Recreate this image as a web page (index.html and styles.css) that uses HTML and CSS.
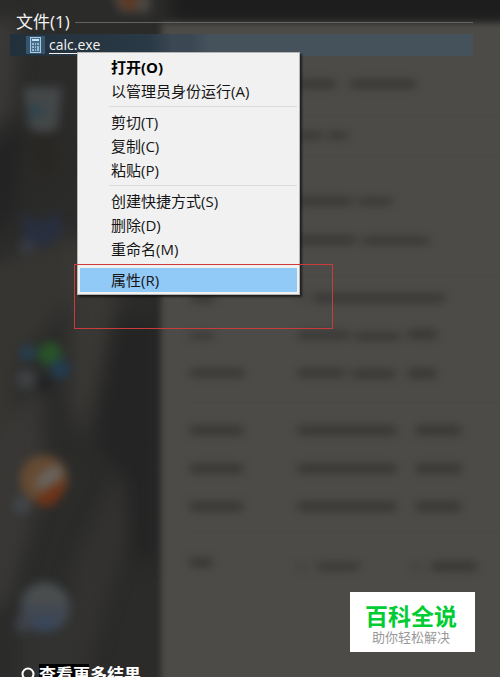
FILE: index.html
```html
<!DOCTYPE html>
<html lang="zh-CN">
<head>
<meta charset="utf-8">
<title>文件</title>
<link rel="stylesheet" href="styles.css">
</head>
<body>
<main class="screen">
  <svg class="backdrop" viewBox="0 0 500 677" preserveAspectRatio="xMinYMin slice" color-interpolation-filters="sRGB" aria-hidden="true">
    <defs>
      <filter id="soft" x="-50%" y="-50%" width="200%" height="200%"><feGaussianBlur stdDeviation="5"/></filter>
      <filter id="wide" x="-50%" y="-50%" width="200%" height="200%"><feGaussianBlur stdDeviation="9"/></filter>
      <filter id="edge" x="-10%" y="-10%" width="120%" height="120%"><feGaussianBlur stdDeviation="3"/></filter>
      <filter id="smudge" filterUnits="userSpaceOnUse" x="160" y="0" width="340" height="677"><feGaussianBlur stdDeviation="5 4"/></filter>
    </defs>
    <rect width="500" height="677" fill="#2b2b2a"/>
    <g filter="url(#wide)">
      <path d="M-20 20H20L12 110L-20 140Z" fill="#3b3937"/>
      <path d="M-20 270L70 230L70 300L20 360L10 440L-20 460Z" fill="#363532"/>
      <path d="M70 240H130L108 340L85 440L70 400Z" fill="#3a3835"/>
      <path d="M-20 460L40 380L45 480L10 600L-20 620Z" fill="#383735"/>
      <path d="M145 370L120 470L75 560L60 677H85L112 580L160 460Z" fill="#333230"/>
      <path d="M20 620L70 600V700H20Z" fill="#323230"/>
      <path d="M-10 150L25 120L15 210L-10 240Z" fill="#222322"/>
      <path d="M115 320H158V560H130L125 480L95 440Z" fill="#242424"/>
      <path d="M45 120L60 160L40 190L30 150Z" fill="#282622"/>
      <path d="M170 -10H520V20H170Z" fill="#1c1c1c"/>
    </g>
    <g filter="url(#soft)" opacity=".8">
      <path d="M112 -6H150V12H120Z" fill="#55504a"/>
      <circle cx="129" cy="1" r="9" fill="#6e3d22"/>
      <path d="M23 87H62L58 128Q43 137 29 128Z" fill="#4b4f50"/>
      <circle cx="36" cy="111" r="8" fill="#344b58"/>
      <path d="M22 214L40 222L58 212L64 230L48 248L24 244Z" fill="#272f42"/>
      <circle cx="27" cy="247" r="8" fill="#383e47"/>
      <circle cx="28" cy="353" r="8" fill="#24445a"/>
      <circle cx="50" cy="354" r="12" fill="#285d29"/>
      <circle cx="60" cy="369" r="10" fill="#20405a"/>
      <circle cx="45" cy="384" r="8" fill="#202122"/>
      <circle cx="26" cy="379" r="10" fill="#43464a"/>
      <circle cx="44" cy="479" r="24" fill="#725033"/>
      <path d="M34 500L65 477Q64 506 43 507Z" fill="#7e3512"/>
      <path d="M35 482Q48 463 62 466L61 480L40 491Z" fill="#77706a"/>
      <circle cx="22" cy="505" r="9" fill="#444950"/>
      <circle cx="45" cy="607" r="25" fill="#464f5b"/>
      <path d="M23 603Q28 582 49 584Q66 588 66 605Z" fill="#535757"/>
      <path d="M30 618H60L52 631H37Z" fill="#3a4c66"/>
      <circle cx="24" cy="624" r="9" fill="#424850"/>
    </g>
    <path d="M161 23H530V700H161Z" fill="#4c4b48" filter="url(#edge)"/>
    <g filter="url(#smudge)" fill="#282826" opacity=".58">
      <path d="M298 80h38v8h-38zM350 80h66v8h-66z"/>
      <path d="M298 132h24v7h-24zM328 132h20v7h-20z"/>
      <path d="M298 197h54v8h-54zM358 198h34v7h-34z"/>
      <path d="M298 236h58v8h-58zM362 237h67v7h-67z"/>
      <path d="M191 294h23v8h-23zM300 295h5v5h-5zM313 294h132v8h-132z"/>
      <path d="M190 333h24v6h-24zM298 331h51v8h-51zM354 333h47v7h-47zM408 330h29v9h-29z"/>
      <path d="M190 369h54v8h-54zM298 369h47v8h-47zM352 370h43v8h-43zM408 369h28v9h-28z"/>
      <path d="M190 426h53v9h-53zM298 426h98v9h-98zM416 426h45v9h-45z"/>
      <path d="M190 464h53v9h-53zM298 464h98v9h-98zM416 464h45v9h-45z"/>
      <path d="M190 502h53v9h-53zM298 502h98v9h-98zM416 502h45v9h-45z"/>
      <path d="M190 558h22v9h-22z"/>
      <path d="M295 562h12v10h-12zM410 562h12v10h-12z" opacity=".3"/>
      <path d="M317 563h42v7h-42zM431 562h46v9h-46z"/>
    </g>
    <path d="M190 155.500H500M190 115.500H500M190 275.500H500M190 402.500H500M190 532.500H500" stroke="#474644" stroke-width="2" opacity=".3"/>
  </svg>

  <section class="results">
    <h1 class="group-title">文件(1)</h1>
    <div class="result">
      <span class="result-icon">
        <svg viewBox="0 0 19 18" width="19" height="18" aria-hidden="true">
          <rect x="4.500" y="1.500" width="10" height="15" fill="#466d8b" stroke="#a9cbe2"/>
          <rect x="6" y="3" width="7" height="2" fill="#c9e2f2"/>
          <path d="M6 7h2v2H6zM9 7h1v2H9zM11 7h2v2h-2zM6 10h2v2H6zM9 10h1v2H9zM11 10h2v5h-2zM6 13h2v2H6zM9 13h1v2H9z" fill="#93b8d2"/>
        </svg>
      </span>
      <a class="result-name" href="#calc">calc.exe</a>
      <ul class="menu">
        <li><button class="item default" type="button">打开(O)</button></li>
        <li><button class="item" type="button">以管理员身份运行(A)</button></li>
        <li class="divider"></li>
        <li><button class="item" type="button">剪切(T)</button></li>
        <li><button class="item" type="button">复制(C)</button></li>
        <li><button class="item" type="button">粘贴(P)</button></li>
        <li class="divider"></li>
        <li><button class="item" type="button">创建快捷方式(S)</button></li>
        <li><button class="item" type="button">删除(D)</button></li>
        <li><button class="item" type="button">重命名(M)</button></li>
        <li class="divider"></li>
        <li class="marked"><button class="item active" type="button">属性(R)</button></li>
      </ul>
    </div>
  </section>

  <aside class="badge">
    <strong class="badge-name">百科全说</strong>
    <span class="badge-line">助你轻松解决</span>
  </aside>

  <footer class="more">
    <svg class="more-icon" viewBox="0 0 15 18" width="15" height="18" aria-hidden="true">
      <circle cx="8" cy="8" r="5.500" fill="none" stroke="#fff" stroke-width="2"/>
      <path d="M4 12L1 16" stroke="#fff" stroke-width="2"/>
    </svg>
    <a class="more-link" href="#more">查看更多结果</a>
  </footer>
</main>
</body>
</html>
```
FILE: styles.css
```css
* {
  box-sizing: border-box;
}

body {
  margin: 0;
  background: #2b2b2a;
  font-family: "Open Sans", "Noto Sans CJK SC", sans-serif;
}

.screen {
  position: relative;
  display: flex;
  flex-direction: column;
  min-height: 100vh;
  overflow: hidden;
}

.backdrop {
  position: absolute;
  inset: 0;
  width: 100%;
  height: 100%;
}

.results {
  position: relative;
  z-index: 1;
  padding: 10px 27px 0 10px;
}

.group-title {
  display: flex;
  align-items: center;
  gap: 5px;
  height: 24px;
  margin: 0;
  padding-left: 6px;
  color: #f4f4f4;
  font-size: 17px;
  font-weight: 400;
  line-height: 24px;
}

.group-title::after {
  content: "";
  flex: 1;
  height: 1px;
  background: #656462;
}

.result {
  position: relative;
  display: flex;
  align-items: center;
  gap: 4px;
  height: 22px;
  padding-left: 16px;
  background: linear-gradient(90deg, #22303b, #293945 30%, #3b4752 35%, #3b4752 39%, #45525c 43%, #45525c);
}

.result-icon {
  display: flex;
  background: #36566f;
}

.result-name {
  color: #f4f4f4;
  font-size: 14px;
  line-height: 22px;
  text-decoration: underline;
  text-underline-offset: 3px;
}

.menu {
  position: absolute;
  top: 18px;
  left: 67px;
  width: 223px;
  margin: 0;
  padding: 2px;
  list-style: none;
  background: #f1f1f1;
  border: 1px solid #b5b5b5;
  box-shadow: 2px 2px 2px rgba(0, 0, 0, 0.6);
}

.item {
  display: block;
  width: 100%;
  height: 24px;
  padding: 0 0 0 31px;
  border: 0;
  background: none;
  color: #151515;
  font-family: inherit;
  font-size: 15px;
  line-height: 22px;
  text-align: left;
  white-space: nowrap;
}

.default {
  color: #000;
  font-weight: 700;
}

.active {
  background: #91c9f7;
}

.divider {
  height: 7px;
  padding: 3px 0 3px 29px;
}

.divider::before {
  content: "";
  display: block;
  height: 1px;
  background: #dcdcdc;
}

.marked {
  position: relative;
}

.marked::after {
  content: "";
  position: absolute;
  top: -4px;
  left: -6px;
  width: 257px;
  height: 63px;
  border: 1px solid #cc3b3b;
  pointer-events: none;
}

.badge {
  position: relative;
  display: flex;
  flex-direction: column;
  align-items: center;
  align-self: flex-end;
  gap: 2px;
  width: 125px;
  height: 60px;
  margin: auto 25px 12px 0;
  padding: 12px 3px 0 0;
  background: #fff;
  font-family: "Noto Sans CJK SC", sans-serif;
}

.badge-name {
  color: #00cc33;
  font-size: 23px;
  font-weight: 700;
  line-height: 23px;
}

.badge-line {
  color: #999;
  font-size: 13px;
  line-height: 15px;
}

.more {
  position: relative;
  display: flex;
  gap: 4px;
  height: 13px;
  padding-left: 20px;
  overflow: hidden;
}

.more-icon {
  flex: none;
  margin-top: 2px;
}

.more-link {
  height: 24px;
  background: linear-gradient(#000, #000) left top / 50px 100% no-repeat;
  color: #fff;
  font-size: 17px;
  font-weight: 700;
  line-height: 22px;
  text-decoration: none;
}
```
